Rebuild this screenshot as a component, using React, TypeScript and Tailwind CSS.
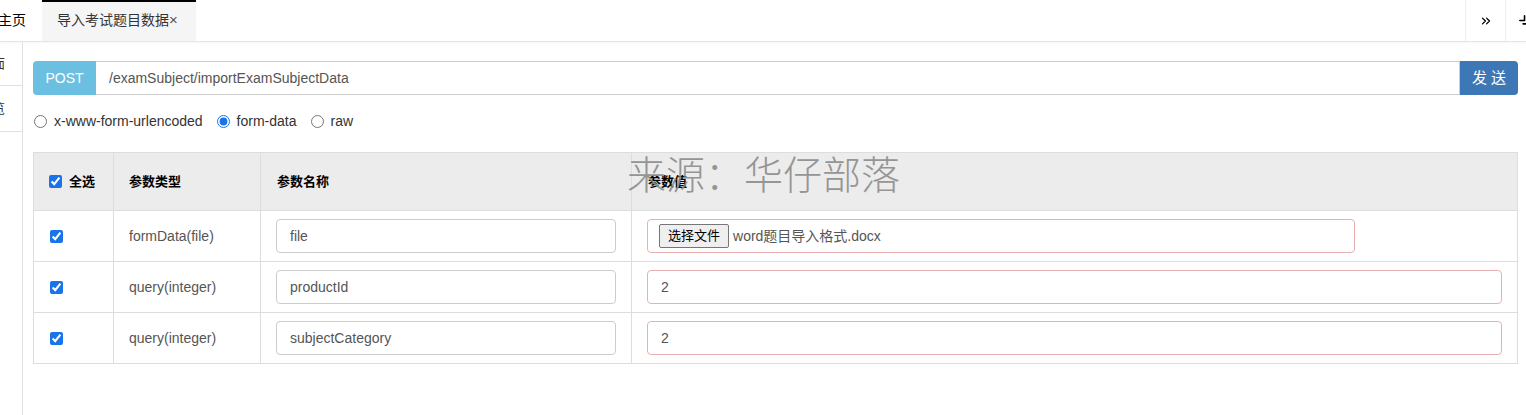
import { ChevronsRight, ChevronsDown } from 'lucide-react';

const FONT = "font-['Liberation_Sans','Noto_Sans_CJK_SC',sans-serif]";

const rows = [
  { type: 'formData(file)', name: 'file', value: '', file: true },
  { type: 'query(integer)', name: 'productId', value: '2', file: false },
  { type: 'query(integer)', name: 'subjectCategory', value: '2', file: false },
];

export default function App() {
  return (
    <div className={`${FONT} relative w-[1526px] h-[415px] overflow-hidden bg-white text-[14px] text-[#333]`}>
      {/* Tab bar */}
      <div className="flex h-[42px] border-b border-[#e6e6e6] shadow-[0_1px_2px_rgba(0,0,0,0.04)]">
        <div className="flex flex-1 overflow-hidden">
          <div className="ml-[-17px] flex items-center pl-[15px] pr-[16px] text-black">主页</div>
          <div className="flex w-[154px] items-center border-t-2 border-black bg-[#f5f5f5] pl-[15px] pb-[2px] text-[#333]">
            导入考试题目数据<span className="text-[15px] text-[#555]">×</span>
          </div>
        </div>
        <div className="flex w-[40px] items-center justify-center border-l border-[#eeeeee]">
          <ChevronsRight className="h-[14px] w-[14px] text-black" strokeWidth={2.2} />
        </div>
        <div className="flex w-[21px] items-center overflow-hidden border-l border-[#eeeeee] pl-[11px]">
          <ChevronsDown className="h-[16px] w-[16px] shrink-0 -rotate-45 text-black" strokeWidth={2.4} />
        </div>
      </div>

      <div className="flex h-[373px]">
        {/* Sidebar fragment */}
        <div className="w-[23px] overflow-hidden border-r border-[#e0e0e0]">
          <div className="flex h-[44px] items-center overflow-hidden border-b border-[#e0e0e0] pt-[1px] text-[13px] text-[#333]">
            <span className="ml-[-8px]">面</span>
          </div>
          <div className="flex h-[45px] items-center overflow-hidden text-[13px] text-[#333]">
            <span className="ml-[-8px]">览</span>
          </div>
          <div className="h-[60px] border-t border-[#e0e0e0]" />
        </div>

        {/* Main */}
        <div className="flex-1 pl-[10px] pr-[8px] pt-[19px]">
          <div className="flex h-[34px]">
            <div className="flex w-[63px] items-center justify-center rounded-l-[4px] bg-[#6bbfe0] text-[14px] text-white">POST</div>
            <div className="flex flex-1 items-center border border-l-0 border-[#cccccc] pl-[13px] text-[14px] text-[#555]">
              /examSubject/importExamSubjectData
            </div>
            <div className="flex w-[58px] items-center justify-center rounded-r-[4px] bg-[#3e77b6] text-[15px] text-white">发 送</div>
          </div>

          <div className="mt-[18px] flex h-[16px] items-center text-[14px] text-[#333]">
            <label className="flex items-center">
              <input type="radio" name="ct" className="m-0 mr-[7px] ml-[1px] h-[13px] w-[13px] accent-[#1a73e8]" readOnly />
              x-www-form-urlencoded
            </label>
            <label className="ml-[14px] flex items-center">
              <input type="radio" name="ct" defaultChecked className="m-0 mr-[7px] h-[13px] w-[13px] accent-[#1a73e8]" />
              form-data
            </label>
            <label className="ml-[14px] flex items-center">
              <input type="radio" name="ct" className="m-0 mr-[7px] h-[13px] w-[13px] accent-[#1a73e8]" readOnly />
              raw
            </label>
          </div>

          <table className="mt-[23px] w-full border-collapse border border-[#dddddd] text-[14px]">
            <colgroup>
              <col className="w-[80px]" />
              <col className="w-[147px]" />
              <col className="w-[371px]" />
              <col />
            </colgroup>
            <thead>
              <tr className="h-[58px] bg-[#ececec] text-left text-[13px] font-bold text-black">
                <th className="border border-[#dddddd] pl-[15px] font-bold">
                  <label className="flex items-center">
                    <input type="checkbox" defaultChecked className="m-0 mr-[7px] h-[13px] w-[13px] accent-[#1a73e8]" />
                    全选
                  </label>
                </th>
                <th className="border border-[#dddddd] pl-[15px] font-bold">参数类型</th>
                <th className="border border-[#dddddd] pl-[16px] font-bold">参数名称</th>
                <th className="border border-[#dddddd] pl-[16px] font-bold">参数值</th>
              </tr>
            </thead>
            <tbody>
              {rows.map((r) => (
                <tr key={r.name} className="h-[51px]">
                  <td className="border border-[#dddddd] pl-[16px]">
                    <input type="checkbox" defaultChecked className="m-0 block h-[13px] w-[13px] accent-[#1a73e8]" />
                  </td>
                  <td className="border border-[#dddddd] pl-[15px] text-[#555]">{r.type}</td>
                  <td className="border border-[#dddddd] pl-[15px] pr-[15px]">
                    <div className="flex h-[34px] items-center rounded-[4px] border border-[#cccccc] pl-[13px] text-[#555]">{r.name}</div>
                  </td>
                  <td className="border border-[#dddddd] pl-[15px] pr-[15px]">
                    {r.file ? (
                      <div className="flex h-[34px] w-[708px] items-center rounded-[4px] border border-[#e8b0b0] pl-[11px] text-[#555]">
                        <span className="mr-[4px] flex h-[24px] items-center rounded-[2px] border border-[#767676] bg-[#efefef] px-[8px] text-[13px] text-black">选择文件</span>
                        word题目导入格式.docx
                      </div>
                    ) : (
                      <div className="flex h-[34px] items-center rounded-[4px] border border-[#e8b0b0] pl-[13px] text-[#555]">{r.value}</div>
                    )}
                  </td>
                </tr>
              ))}
            </tbody>
          </table>
        </div>
      </div>

      {/* Watermark */}
      <div className="pointer-events-none absolute left-[627px] top-[146px] whitespace-pre font-['Noto_Sans_CJK_SC',sans-serif] text-[39px] font-light leading-[52px] text-[#8c8c8c] opacity-90">
        来源：华仔部落
      </div>
    </div>
  );
}
